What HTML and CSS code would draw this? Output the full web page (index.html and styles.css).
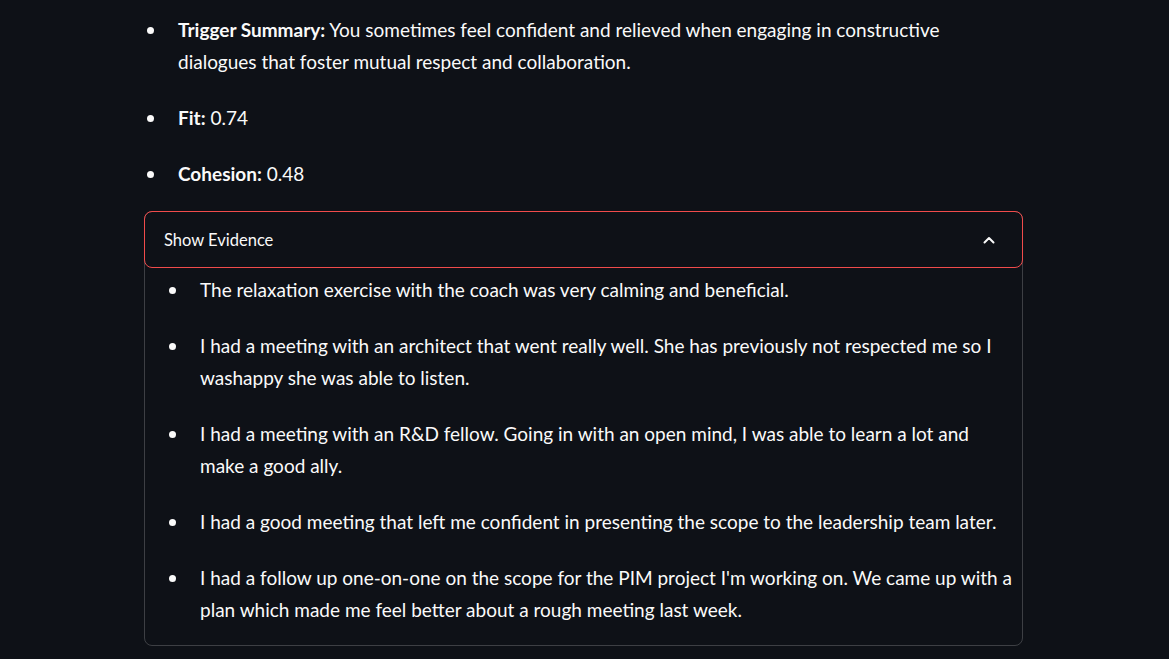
FILE: index.html
```html
<!DOCTYPE html>
<html lang="en">
<head>
<meta charset="utf-8">
<title>Trigger</title>
<link rel="stylesheet" href="styles.css">
</head>
<body>
<main class="block">
  <ul class="list top-list">
    <li><span><strong>Trigger Summary:</strong> You sometimes feel confident and relieved when engaging in constructive dialogues that foster mutual respect and collaboration.</span></li>
    <li><span><strong>Fit:</strong> 0.74</span></li>
    <li><span><strong>Cohesion:</strong> 0.48</span></li>
  </ul>
  <section class="expander">
    <div class="exp-header">
      <span class="exp-title">Show Evidence</span>
      <svg class="chev" width="14" height="14" viewBox="0 0 14 14"><path d="M2.5 9.5 L7 5 L11.5 9.5" fill="none" stroke="#fafafa" stroke-width="2" stroke-linecap="round" stroke-linejoin="round"/></svg>
    </div>
    <ul class="list ev-list">
      <li><span>The relaxation exercise with the coach was very calming and beneficial.</span></li>
      <li><span>I had a meeting with an architect that went really well. She has previously not respected me so I washappy she was able to listen.</span></li>
      <li><span>I had a meeting with an R&amp;D fellow. Going in with an open mind, I was able to learn a lot and make a good ally.</span></li>
      <li><span>I had a good meeting that left me confident in presenting the scope to the leadership team later.</span></li>
      <li><span>I had a follow up one-on-one on the scope for the PIM project I'm working on. We came up with a plan which made me feel better about a rough meeting last week.</span></li>
    </ul>
  </section>
</main>
</body>
</html>
```
FILE: styles.css
```css
html, body {
  margin: 0;
  padding: 0;
  background: #0e1117;
}
body {
  color: #fafafa;
  font-family: "Lato", "Source Sans Pro", sans-serif;
  font-size: 19px;
  line-height: 32px;
}
.block {
  width: 879px;
  margin: 0 0 0 144px;
  padding-top: 14px;
}
.list {
  list-style: none;
  margin: 0;
  padding: 0;
  display: flex;
  flex-direction: column;
  gap: 24px;
}
.list li {
  display: flex;
  align-items: flex-start;
}
.list li::before {
  content: "";
  flex: none;
  width: 7px;
  height: 7px;
  border-radius: 50%;
  background: #fafafa;
  margin-top: 13px;
  margin-left: 3px;
  margin-right: 24px;
}
.top-list {
  padding-right: 40px;
}
strong {
  font-weight: 700;
}
.expander {
  margin-top: 21px;
  border: 1px solid rgba(250, 250, 250, 0.2);
  border-radius: 8px;
  padding-bottom: 19px;
}
.exp-header {
  margin: -1px -1px 0 -1px;
  height: 57px;
  box-sizing: border-box;
  border: 1px solid #f04b4b;
  border-radius: 8px;
  display: flex;
  align-items: center;
  justify-content: space-between;
  padding: 0 26px 0 19px;
}
.exp-title {
  font-size: 16.5px;
  line-height: 24px;
}
.chev {
  display: block;
}
.ev-list {
  margin-top: 6px;
  padding-left: 21px;
  padding-right: 7px;
}
```
